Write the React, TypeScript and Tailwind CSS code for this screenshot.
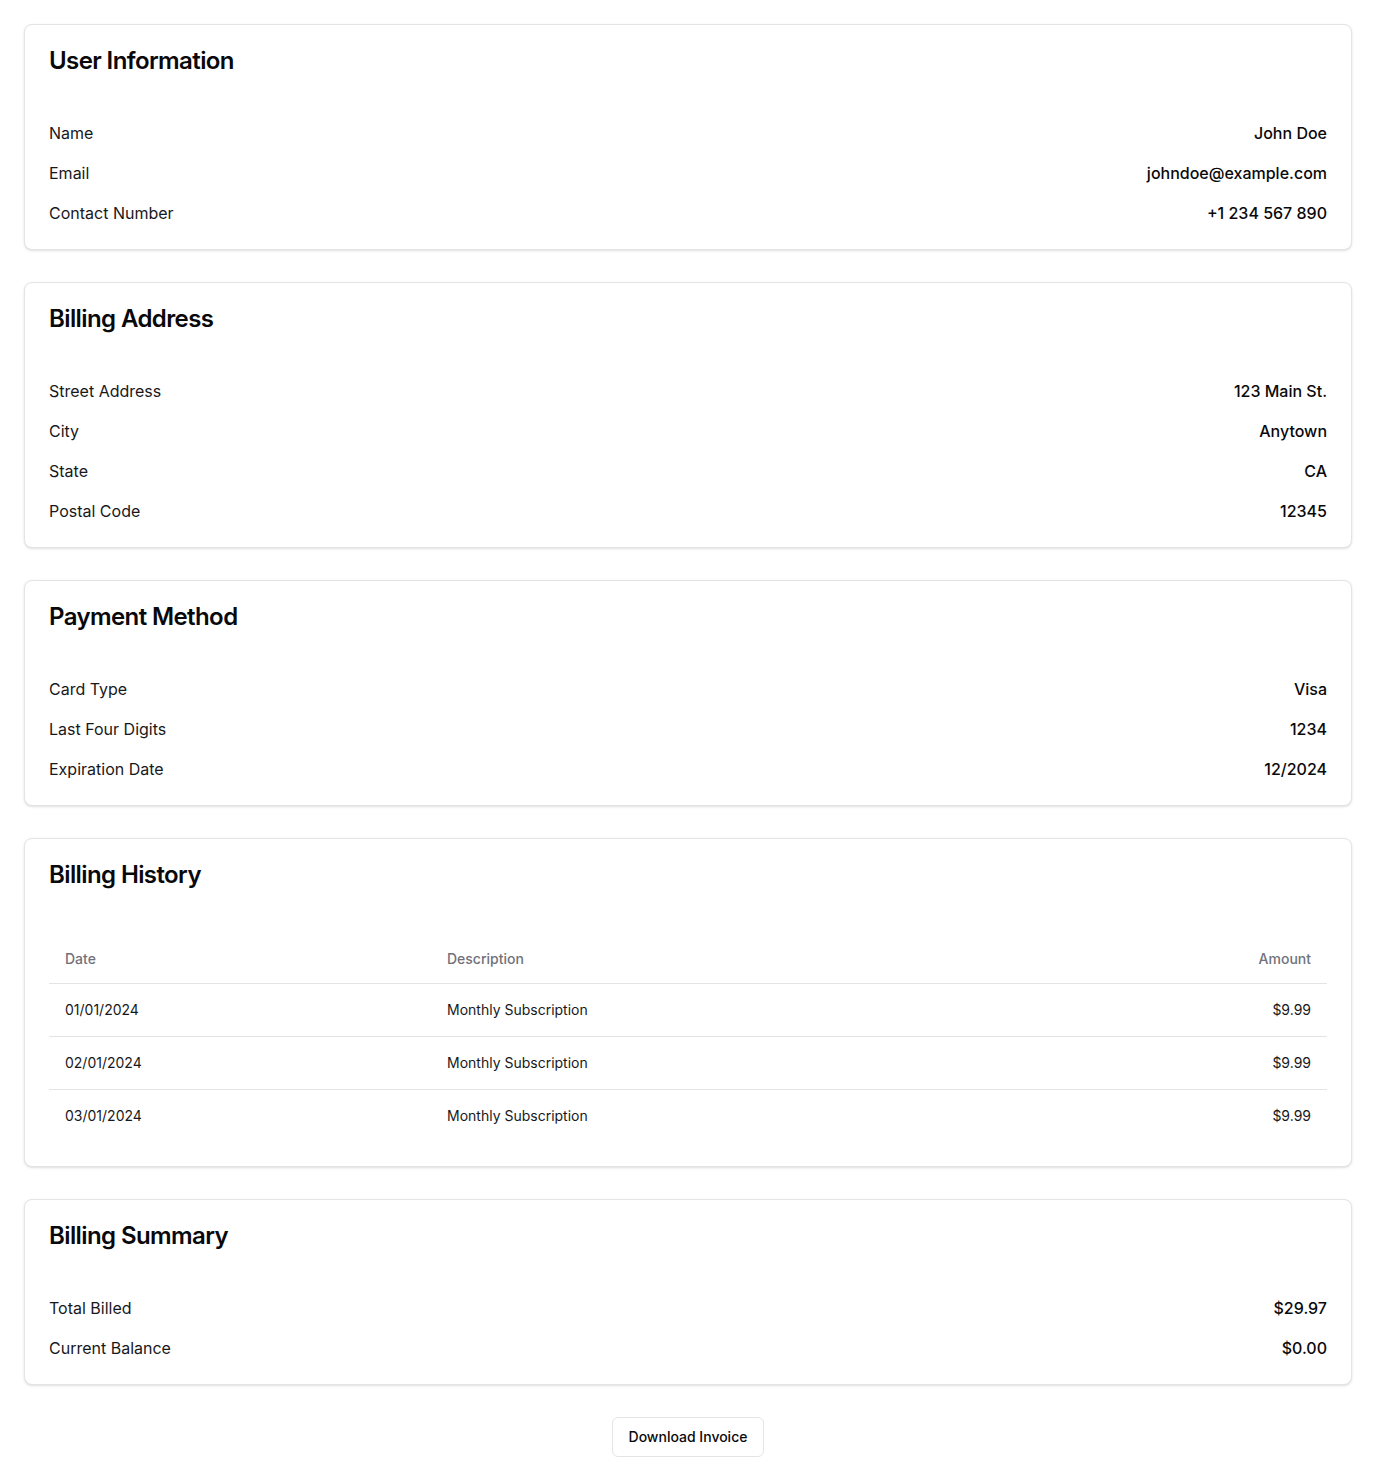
const sans = "font-['Inter',sans-serif]";

type Row = { label: string; value: string };

function InfoCard({ title, rows }: { title: string; rows: Row[] }) {
	return (
		<div className="rounded-lg border border-[#e4e4e7] bg-white shadow-sm">
			<div className="p-6">
				<h2 className="text-2xl leading-none font-semibold tracking-tight text-[#09090b]">
					{title}
				</h2>
			</div>
			<div className="p-6 flex flex-col gap-4">
				{rows.map((r) => (
					<div key={r.label} className="flex items-center justify-between text-base leading-6">
						<span className="text-[#18181b]">{r.label}</span>
						<span className="font-medium text-[#09090b]">{r.value}</span>
					</div>
				))}
			</div>
		</div>
	);
}

const history = [
	{ date: "01/01/2024", desc: "Monthly Subscription", amount: "$9.99" },
	{ date: "02/01/2024", desc: "Monthly Subscription", amount: "$9.99" },
	{ date: "03/01/2024", desc: "Monthly Subscription", amount: "$9.99" },
];

function HistoryCard() {
	return (
		<div className="rounded-lg border border-[#e4e4e7] bg-white shadow-sm">
			<div className="p-6">
				<h2 className="text-2xl leading-none font-semibold tracking-tight text-[#09090b]">
					Billing History
				</h2>
			</div>
			<div className="p-6">
				<table className="w-full table-fixed text-sm border-collapse">
					<colgroup>
						<col className="w-[382px]" />
						<col />
						<col className="w-[300px]" />
					</colgroup>
					<thead>
						<tr className="border-b border-[#e4e4e7]">
							<th className="h-12 px-4 text-left align-middle font-medium text-[#71717a]">
								Date
							</th>
							<th className="h-12 px-4 text-left align-middle font-medium text-[#71717a]">
								Description
							</th>
							<th className="h-12 px-4 text-right align-middle font-medium text-[#71717a]">
								Amount
							</th>
						</tr>
					</thead>
					<tbody>
						{history.map((h, i) => (
							<tr
								key={h.date}
								className={i < history.length - 1 ? "border-b border-[#e4e4e7]" : ""}
							>
								<td className="p-4 leading-5 text-[#18181b]">{h.date}</td>
								<td className="p-4 leading-5 text-[#18181b]">{h.desc}</td>
								<td className="p-4 leading-5 text-right text-[#18181b]">{h.amount}</td>
							</tr>
						))}
					</tbody>
				</table>
			</div>
		</div>
	);
}

export default function App() {
	return (
		<div className={`${sans} bg-white p-6 flex flex-col gap-8`}>
			<InfoCard
				title="User Information"
				rows={[
					{ label: "Name", value: "John Doe" },
					{ label: "Email", value: "johndoe@example.com" },
					{ label: "Contact Number", value: "+1 234 567 890" },
				]}
			/>
			<InfoCard
				title="Billing Address"
				rows={[
					{ label: "Street Address", value: "123 Main St." },
					{ label: "City", value: "Anytown" },
					{ label: "State", value: "CA" },
					{ label: "Postal Code", value: "12345" },
				]}
			/>
			<InfoCard
				title="Payment Method"
				rows={[
					{ label: "Card Type", value: "Visa" },
					{ label: "Last Four Digits", value: "1234" },
					{ label: "Expiration Date", value: "12/2024" },
				]}
			/>
			<HistoryCard />
			<InfoCard
				title="Billing Summary"
				rows={[
					{ label: "Total Billed", value: "$29.97" },
					{ label: "Current Balance", value: "$0.00" },
				]}
			/>
			<div className="flex justify-center">
				<button
					type="button"
					className="h-10 px-4 rounded-md border border-[#e4e4e7] bg-white text-sm font-medium text-[#09090b]"
				>
					Download Invoice
				</button>
			</div>
		</div>
	);
}
